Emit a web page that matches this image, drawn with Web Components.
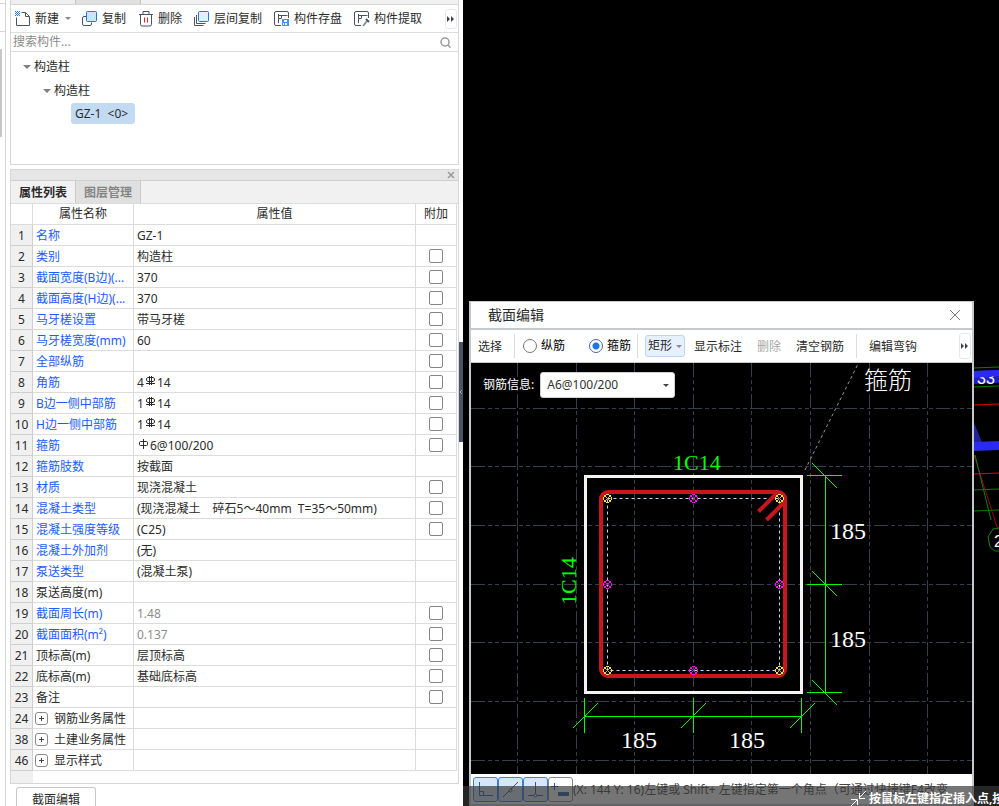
<!DOCTYPE html>
<html lang="zh-CN">
<head>
<meta charset="utf-8">
<title>截面编辑</title>
<style>
html, body { height: 100%; }
body {
    margin: 0;
    overflow: hidden;
    background: #000;
    color: #2b2b2b;
    font: 12px/16px "Noto Sans", "Noto Sans CJK SC", sans-serif;
}
</style>
</head>
<body>
<app-shell></app-shell>

<script>
// Shared base: every element clones its own template into an open shadow root
class BaseElement extends HTMLElement {
    constructor() {
        super();
        const shadow = this.attachShadow({ mode: 'open' });
        const template = document.createElement('template');
        template.innerHTML = this.constructor.html;
        shadow.appendChild(template.content.cloneNode(true));
    }
}

const ICONS = {
    add: '<path d="M6.5 1.5h4l4 4v9h-13v-8M10.5 1.5v4h4" fill="none" stroke="#4a5266"/><path d="M0 0h1v1H0zM2 0h1v1H2zM4 0h1v1H4zM1 1h1v1H1zM3 1h1v1H3zM0 2h1v1H0zM2 2h1v1H2zM4 2h1v1H4zM1 3h1v1H1zM3 3h1v1H3zM0 4h1v1H0zM2 4h1v1H2zM4 4h1v1H4z" fill="#1e74e8"/>',
    copy: '<path d="M4 5.500H2q-1.500 0-1.500 1.500v6q0 1.500 1.500 1.500h6q1.500 0 1.500-1.500v-1.500" fill="none" stroke="#4a5266"/><rect x="4.500" y=".5" width="10" height="10" rx="1" fill="#cfe2fb" stroke="#1e74e8"/>',
    trash: '<path d="M1 3.500h14M5 3V.5h6V3M2.500 4v9.500q0 1.500 1.500 1.500h8q1.500 0 1.500-1.500V4" fill="none" stroke="#4a5266"/><path d="M6.500 6.500v5M9.500 6.500v5" stroke="#e02020"/>',
    layers: '<path d="M.5 6v8.500h9M2.500 4v8.500h9" fill="none" stroke="#4a5266"/><rect x="4.500" y=".5" width="10" height="10" rx="1" fill="#e3effd" stroke="#1e74e8"/>',
    save: '<path d="M7 14.500H2Q.5 14.500.5 13V2Q.5.5 2 .5h11q1.500 0 1.500 1.500v5M4.500 3v9M4.500 7.500h3M4.500 4.500h9M7.500 4.500V7" fill="none" stroke="#4a5266"/><path d="M8 8h7v7H8z" fill="#4c8fe8"/><path d="M10 9h3v2h-3zM9 12h1v2H9zM11 12h2v2h-2z" fill="#fff"/>',
    extract: '<path d="M7 14.500H2Q.5 14.500.5 13V2Q.5.5 2 .5h11q1.500 0 1.500 1.500v5M4.500 3v9M4.500 7.500h3M4.500 4.500h9M7.500 4.500V7" fill="none" stroke="#4a5266"/><path d="M9 15l4-5" stroke="#8a909c" stroke-width="2"/><path d="M12 8l3 3" stroke="#4a5266" stroke-width="2"/>'
};

class ToolItem extends BaseElement {
    static html = `
    <style>
    :host { display: block; flex: none; }
    button {
        display: flex; align-items: center; gap: 4px;
        border: 0; padding: 0; background: none;
        font: inherit; color: #2b2b2b;
    }
    svg { width: 16px; height: 16px; }
    i { display: none; border: 3px solid transparent; border-top-color: #8a8a8a; border-bottom: 0; margin-left: 2px; }
    :host([menu]) { margin-right: -1px; }
    :host([menu]) i { display: block; }
    </style>
    <button type="button"><svg viewBox="0 0 16 16"></svg><slot></slot><i></i></button>`;

    connectedCallback() {
        this.shadowRoot.querySelector('svg').innerHTML = ICONS[this.getAttribute('icon')];
    }
}
customElements.define('tool-item', ToolItem);

class MoreButton extends BaseElement {
    static html = `
    <style>
    :host { display: block; flex: none; margin-left: auto; }
    button {
        display: flex; align-items: center; justify-content: center;
        width: 12px; height: 100%; padding: 0;
        border: 1px solid #e8e8e8; border-radius: 3px; background: #fff;
    }
    svg { flex: none; }
    </style>
    <button type="button" aria-label="更多"><svg width="8" height="6"><path d="M0 0l3 3-3 3zM4 0l3 3-3 3z" fill="#3c4254"/></svg></button>`;
}
customElements.define('more-button', MoreButton);

class ComponentList extends BaseElement {
    static html = `
    <style>
    :host { display: flex; flex-direction: column; height: 165px; border: 1px solid #d6d6d6; border-top: 0; box-sizing: border-box; background: #fff; }
    .tabs { display: flex; height: 4px; flex: none; background: #f1f1f1; border-bottom: 1px solid #d6d6d6; }
    .tabs span { width: 64px; border-right: 1px solid #bfc2c6; background: #efefef; }
    .tabs span + span { background: #e0e0e0; }
    .tools { display: flex; align-items: center; gap: 12px; height: 27px; flex: none; padding: 0 1px 0 4px; border-bottom: 1px solid #dedede; }
    more-button { height: 20px; }
    .search { display: flex; align-items: center; height: 18px; flex: none; padding: 0 7px 0 2px; border-bottom: 1px solid #dedede; }
    input { flex: 1; min-width: 0; border: 0; padding: 0; outline: 0; font: inherit; background: none; }
    input::placeholder { color: #8c8c8c; }
    ul { list-style: none; margin: 0; padding: 0; }
    .tree { padding: 3px 0 0 13px; }
    ul ul { padding-left: 20px; }
    .node { display: flex; align-items: center; gap: 3px; height: 24px; }
    .node i { border: 4px solid transparent; border-top-color: #808080; border-bottom: 0; margin-left: -1px; }
    .tree .leaf { padding-left: 27px; }
    .leaf a { display: inline-block; box-sizing: border-box; min-width: 64px; padding: 3px 4px 2px; border-radius: 3px; background: #c2daf2; color: #2b2b2b; text-decoration: none; }
    </style>
    <div class="tabs"><span></span><span></span></div>
    <div class="tools">
        <tool-item icon="add" menu>新建</tool-item>
        <tool-item icon="copy">复制</tool-item>
        <tool-item icon="trash">删除</tool-item>
        <tool-item icon="layers">层间复制</tool-item>
        <tool-item icon="save">构件存盘</tool-item>
        <tool-item icon="extract">构件提取</tool-item>
        <more-button></more-button>
    </div>
    <div class="search">
        <input type="text" placeholder="搜索构件..." aria-label="搜索构件">
        <svg width="11" height="11" fill="none" stroke="#999" stroke-width="1.500"><circle cx="5" cy="5" r="4"/><path d="M8 8l2.500 2.500"/></svg>
    </div>
    <ul class="tree">
        <li><div class="node"><i></i>构造柱</div>
            <ul>
                <li><div class="node"><i></i>构造柱</div>
                    <ul class="leaf"><li><a href="#gz-1">GZ-1 &nbsp;&lt;0&gt;</a></li></ul>
                </li>
            </ul>
        </li>
    </ul>`;
}
customElements.define('component-list', ComponentList);

// Rebar grade marks that stand in front of the bar diameter
class RebarMark extends BaseElement {
    static html = `
    <style>
    :host { display: inline-block; width: 11px; height: 12px; margin: 0 1px; vertical-align: -1px; }
    svg { display: block; fill: none; stroke: #2b2b2b; }
    .c { display: none; }
    :host([grade="C"]) .c { display: inline; }
    :host([grade="C"]) .a { display: none; }
    </style>
    <svg width="11" height="12">
        <g class="c"><path d="M3 1.500h5l1.500 1v2l-1.500 1H3l-1.500-1v-2zM4.500 0v9M6.500 0v9M1 7.500h9"/></g>
        <g class="a"><rect x="1.500" y="2.500" width="8" height="4" rx="1"/><path d="M5.500 0v10"/></g>
    </svg>`;
}
customElements.define('rebar-mark', RebarMark);

const C = '<rebar-mark grade="C"></rebar-mark>';
const A = '<rebar-mark grade="A"></rebar-mark>';

// [row number, name, value, flags]: b = blue name, c = has tick box, g = grey value, x = expandable
const ROWS = [
    [1, '名称', 'GZ-1', 'b'],
    [2, '类别', '构造柱', 'bc'],
    [3, '截面宽度(B边)(...', '370', 'bc'],
    [4, '截面高度(H边)(...', '370', 'bc'],
    [5, '马牙槎设置', '带马牙槎', 'bc'],
    [6, '马牙槎宽度(mm)', '60', 'bc'],
    [7, '全部纵筋', '', 'bc'],
    [8, '角筋', `4${C}14`, 'bc'],
    [9, 'B边一侧中部筋', `1${C}14`, 'bc'],
    [10, 'H边一侧中部筋', `1${C}14`, 'bc'],
    [11, '箍筋', `${A}6@100/200`, 'bc'],
    [12, '箍筋肢数', '按截面', 'b'],
    [13, '材质', '现浇混凝土', 'bc'],
    [14, '混凝土类型', '(现浇混凝土　碎石5～40mm &nbsp;T=35～50mm)', 'bc'],
    [15, '混凝土强度等级', '(C25)', 'bc'],
    [16, '混凝土外加剂', '(无)', 'b'],
    [17, '泵送类型', '(混凝土泵)', 'b'],
    [18, '泵送高度(m)', '', ''],
    [19, '截面周长(m)', '1.48', 'bcg'],
    [20, '截面面积(m²)', '0.137', 'bcg'],
    [21, '顶标高(m)', '层顶标高', 'c'],
    [22, '底标高(m)', '基础底标高', 'c'],
    [23, '备注', '', 'c'],
    [24, '钢筋业务属性', '', 'x'],
    [38, '土建业务属性', '', 'x'],
    [46, '显示样式', '', 'x']
];

class PropertyTable extends BaseElement {
    static html = `
    <style>
    :host { display: block; }
    table { width: 100%; border-collapse: separate; border-spacing: 0; table-layout: fixed; }
    .n { width: 22px; }
    .name { width: 101px; }
    .add { width: 41px; }
    th, td {
        box-sizing: border-box; height: 21px; padding: 2px 0 0 3px;
        border: solid #dcdcdc; border-width: 0 1px 1px 0;
        font-weight: normal; text-align: left; white-space: nowrap; overflow: hidden; line-height: 18px;
    }
    thead th { text-align: center; padding: 0; }
    tbody th:first-child { padding: 2px 0 0; text-align: center; background: #f0f0f0; border-color: #cfcfcf; }
    td:last-child { text-align: center; padding: 0; }
    .b { color: #1a5cff; }
    .g { color: #8c8c8c; }
    input {
        appearance: none; display: block; box-sizing: border-box; width: 14px; height: 14px; margin: 0 auto;
        border: 1px solid #858585; border-radius: 2px; background: #fff;
    }
    button {
        width: 13px; height: 13px; padding: 0; margin: 0 6px 0 -1px; vertical-align: -1px;
        border: 1px solid #8a8a8a; border-radius: 3px; background: #fff;
    }
    button svg { display: block; margin: auto; }
    </style>
    <table>
        <colgroup><col class="n"><col class="name"><col><col class="add"></colgroup>
        <thead><tr><th></th><th>属性名称</th><th>属性值</th><th>附加</th></tr></thead>
        <tbody></tbody>
    </table>`;

    connectedCallback() {
        this.shadowRoot.querySelector('tbody').innerHTML = ROWS.map(([n, name, value, f]) => `
        <tr>
            <th scope="row">${n}</th>
            <td class="${f.includes('b') ? 'b' : ''}">${f.includes('x') ? `<button type="button" aria-label="展开"><svg width="7" height="7"><path d="M3.500 1v5M1 3.500h5" stroke="#444"/></svg></button>` : ''}${name}</td>
            <td class="${f.includes('g') ? 'g' : ''}">${value}</td>
            <td>${f.includes('c') ? `<input type="checkbox" aria-label="附加 ${n}">` : ''}</td>
        </tr>`).join('');
    }
}
customElements.define('property-table', PropertyTable);

class PropertyPanel extends BaseElement {
    static html = `
    <style>
    :host { display: block; border: 1px solid #d6d6d6; background: #fff; }
    .bar { display: flex; justify-content: flex-end; align-items: center; height: 10px; padding-right: 3px; background: #e6e6e6; border-bottom: 1px solid #d0d0d0; }
    .bar button { display: flex; border: 0; padding: 0; background: none; }
    .tabs { display: flex; height: 22px; background: #f1f1f1; border-bottom: 1px solid #dcdcdc; }
    .tabs button { width: 65px; padding: 1px 0 0; border: 0; border-right: 1px solid #c8cacd; background: #f1f1f1; font: inherit; font-weight: 600; color: #2b2b2b; white-space: nowrap; }
    .tabs button + button { background: #e0e0e0; color: #858585; }
    property-table { margin-right: 1px; }
    .rest { width: 22px; height: 12px; background: #f0f0f0; }
    </style>
    <div class="bar"><button type="button" aria-label="关闭"><svg width="8" height="8"><path d="M1 1l6 6M7 1L1 7" stroke="#9a9a9a" stroke-width="1.500"/></svg></button></div>
    <div class="tabs"><button type="button">属性列表</button><button type="button">图层管理</button></div>
    <property-table></property-table>
    <div class="rest"></div>`;
}
customElements.define('property-panel', PropertyPanel);

class SideDock extends BaseElement {
    static html = `
    <style>
    :host { display: grid; grid-template-columns: 10px 1fr 4px; background: #fff; height: 100vh; overflow: hidden; }
    .rail { width: 5px; border-right: 1px solid #d6d6d6; background: linear-gradient(#c8c8c8, #c8c8c8) 0 49px / 2px 88px no-repeat, linear-gradient(#d6d6d6, #d6d6d6) 0 31px / 5px 1px no-repeat, linear-gradient(#d6d6d6, #d6d6d6) 0 3px / 5px 1px no-repeat, #fff; }
    .main { display: flex; flex-direction: column; gap: 4px; min-width: 0; }
    .section { display: block; align-self: flex-start; flex: none; width: 80px; height: 24px; margin: -1px 0 0 6px; padding: 0; border: 1px solid #c8c8c8; border-bottom: 0; border-radius: 3px 3px 0 0; background: #fff; font: inherit; color: #2b2b2b; }
    .grip { align-self: start; height: 100px; margin-top: 342px; background: #4b5462; display: flex; align-items: center; }
    </style>
    <div class="rail"></div>
    <div class="main">
        <component-list></component-list>
        <property-panel></property-panel>
        <button class="section" type="button">截面编辑</button>
    </div>
    <div class="grip"><svg width="4" height="6"><path d="M3 1L1 3l2 2" fill="none" stroke="#aab"/></svg></div>`;
}
customElements.define('side-dock', SideDock);

class SectionCanvas extends BaseElement {
    static html = `
    <style>
    :host { display: block; background: #000; overflow: hidden; }
    svg { display: block; width: 100%; height: 100%; }
    .grid { stroke: #363e4c; stroke-dasharray: 14 3 4 3 4 3; }
    .dim { stroke: #0f0; fill: none; }
    text { font-family: "Liberation Serif", "Noto Sans CJK SC", serif; font-size: 24px; fill: #fff; }
    .bar { font-size: 22px; fill: #0f0; }
    .call { font-weight: 300; }
    </style>
    <svg viewBox="0 0 501 411" preserveAspectRatio="xMinYMin meet">
        <g class="grid"></g>
        <path d="M334 107L387 1" stroke="#999" stroke-dasharray="3 3"/>
        <rect x="114.500" y="113.500" width="216" height="216" fill="none" stroke="#f4f4f4" stroke-width="3"/>
        <rect x="136.500" y="135.500" width="172" height="172" fill="none" stroke="#b8dcff" stroke-dasharray="3 3"/>
        <g fill="none" stroke="#c9151e" stroke-width="4">
            <rect x="130" y="129" width="184" height="184" rx="7"/>
            <path d="M287.500 148.500L306 130M295.500 157L314 138.500"/>
        </g>
        <g class="dots" fill="none"></g>
        <g class="dim">
            <path d="M354.500 112.500v217M336 112.500h35M336 221.500h35M336 329.500h35"/>
            <path d="M341 100l25 25M341 208l25 25M341 317l25 25"/>
            <path d="M113.500 353.500h217M113.500 335v35M222.500 335v35M330.500 335v35"/>
            <path d="M102 365l25-25M210 365l25-25M319 365l25-25"/>
        </g>
        <text x="359" y="176">185</text>
        <text x="359" y="284">185</text>
        <text x="150" y="385">185</text>
        <text x="258" y="385">185</text>
        <text class="bar" x="202" y="107">1C14</text>
        <text class="bar" transform="translate(105 242) rotate(-90)">1C14</text>
        <text class="call" x="393" y="26">箍筋</text>
    </svg>`;

    connectedCallback() {
        const xs = [46, 105, 163, 222, 280, 339, 398, 456];
        const ys = [45, 103, 162, 221, 279, 338, 397];
        this.shadowRoot.querySelector('.grid').innerHTML =
            xs.map(x => `<path d="M${x}.5 0V411"/>`).join('') +
            ys.map(y => `<path d="M0 ${y}.5H501"/>`).join('');

        // Octagon ring with four small marks inside, drawn on whole pixels
        const corner = [[136, 135], [308, 135], [136, 307], [308, 307]];
        const middle = [[222, 135], [136, 221], [308, 221], [222, 307]];
        const dot = (color, core) => ([x, y]) => `
            <g transform="translate(${x - 4} ${y - 4})" shape-rendering="crispEdges">
                <path d="M3 0h3v1H3zM3 8h3v1H3zM0 3h1v3H0zM8 3h1v3H8zM1 1h2v2H1zM6 1h2v2H6zM1 6h2v2H1zM6 6h2v2H6z" fill="${color}"/>
                <path d="M3 3h1v1H3zM5 3h1v1H5zM4 4h1v1H4zM3 5h1v1H3zM5 5h1v1H5z" fill="${core}"/>
            </g>`;
        this.shadowRoot.querySelector('.dots').innerHTML =
            corner.map(dot('#f6e04a', '#d8a820')).join('') +
            middle.map(dot('#ff10f0', '#e0109a')).join('');
    }
}
customElements.define('section-canvas', SectionCanvas);

class SectionDialog extends BaseElement {
    static html = `
    <style>
    :host { display: flex; flex-direction: column; box-sizing: border-box; border: solid #c6c9cc; border-width: 1px 2px; background: #fff; }
    header { display: flex; align-items: center; justify-content: space-between; height: 26px; padding: 0 11px 0 17px; border-bottom: 2px solid #c6c9cc; font-size: 14px; }
    header button { display: flex; padding: 0; border: 0; background: none; }
    .tools { display: flex; align-items: center; height: 32px; padding: 0 1px 0 7px; border-bottom: 1px solid #c6c9cc; white-space: nowrap; }
    .tools button { border: 0; padding: 2px 0 0; background: none; font: inherit; color: #2b2b2b; }
    .tools button:disabled { color: #a8a8a8; }
    .tools hr { width: 1px; height: 24px; margin: 0 8px 0 12px; border: 0; background: #dcdcdc; }
    label { display: flex; align-items: center; gap: 4px; color: #000; }
    label + label { margin-left: 24px; }
    .tools label + hr { margin: 0 7px 0 6px; }
    input { appearance: none; box-sizing: border-box; width: 14px; height: 14px; margin: 0; border: 1px solid #777; border-radius: 50%; background: #fff; }
    input:checked { border-color: #4a6a98; background: radial-gradient(circle, #1e74e8 3px, #fff 4px); }
    .tools .shape { display: flex; align-items: center; gap: 4px; box-sizing: border-box; height: 22px; padding: 0 2px; border: 1px solid #bcd6f2; border-radius: 3px; background: #e6f1fd; }
    .shape i { border: 3px solid transparent; border-top-color: #8a8a8a; border-bottom: 0; }
    .set { display: flex; gap: 15px; margin-left: 9px; }
    .tools .set + hr { margin: 0 12px; }
    more-button { height: 26px; }
    .stage { position: relative; }
    .info { position: absolute; left: 12px; top: 9px; display: flex; align-items: center; gap: 6px; }
    .info label { color: #fff; }
    select {
        appearance: none; box-sizing: border-box; width: 135px; height: 26px; padding: 0 6px; border: 1px solid #d0d0d0; border-radius: 3px;
        font: inherit; color: #333; background: #fff;
    }
    .drop { position: relative; display: flex; align-items: center; }
    .drop i { position: absolute; right: 6px; border: 3px solid transparent; border-top-color: #444; border-bottom: 0; }
    footer { display: flex; align-items: center; height: 25px; padding: 3px 0 2px 2px; white-space: nowrap; border-bottom: 1px solid #c6c9cc; }
    footer button { box-sizing: border-box; flex: none; width: 25px; height: 25px; padding: 0; border: 1px solid #3c82dc; border-radius: 3px; background: #d6e6fb; }
    footer button:last-of-type { border-color: #8a8a8a; background: #fff; }
    footer svg { display: block; margin: auto; fill: none; }
    footer span { flex: 1; min-width: 0; overflow: hidden; margin-right: 20px; color: #444; }
    </style>
    <header><slot name="title"></slot><button type="button" aria-label="关闭"><svg width="12" height="12"><path d="M1 1l10 10M11 1L1 11" stroke="#777"/></svg></button></header>
    <div class="tools">
        <button type="button">选择</button>
        <hr>
        <label><input type="radio" name="kind">纵筋</label>
        <label><input type="radio" name="kind" checked>箍筋</label>
        <hr>
        <button class="shape" type="button">矩形<i></i></button>
        <div class="set">
            <button type="button">显示标注</button>
            <button type="button" disabled>删除</button>
            <button type="button">清空钢筋</button>
        </div>
        <hr>
        <button type="button">编辑弯钩</button>
        <more-button></more-button>
    </div>
    <div class="stage">
        <section-canvas></section-canvas>
        <div class="info">
            <label for="rebar">钢筋信息:</label>
            <div class="drop"><select id="rebar"><option>A6@100/200</option></select><i></i></div>
        </div>
    </div>
    <footer>
        <button type="button" aria-label="正交"><svg width="17" height="17"><path d="M2.500 1v13.500H16M2.500 10.500h4v4" stroke="#1f5fae"/></svg></button>
        <button type="button" aria-label="对象捕捉"><svg width="17" height="17"><path d="M1 16L16 1" stroke="#4a5266"/><circle cx="8.500" cy="9.500" r="1.500" fill="#d6e6fb" stroke="#4a5266"/></svg></button>
        <button type="button" aria-label="垂足"><svg width="17" height="17"><path d="M8.500 1v13M1 14.500h15" stroke="#4a5266"/><circle cx="8.500" cy="14.500" r="1.500" fill="#fff" stroke="#1f5fae"/></svg></button>
        <button type="button" aria-label="动态输入"><svg width="19" height="17"><path d="M0 5.500h7M3.500 2v7" stroke="#1f5fae"/><path d="M7 11h11v4H7z" fill="#1f5fae"/></svg></button>
        <span>(X: 144 Y: 16)左键或 Shift+ 左键指定第一个角点（可通过快捷键F4改变</span>
    </footer>`;
}
customElements.define('section-dialog', SectionDialog);

// Part of the 3D model that shows beside the dialog
class ModelScene extends BaseElement {
    static html = `
    <style>
    :host { display: block; }
    svg { display: block; }
    text { font: 16px "Liberation Sans", sans-serif; fill: #fff; }
    </style>
    <svg width="26" height="200" fill="none">
        <path d="M0 11l26-1v13l-26 1z" fill="#2020c0"/>
        <text x="4" y="24">33</text>
        <path d="M0 11l26-1v6l-26 2z" fill="#2a2af0"/>
        <path d="M0 8l26-1M0 27l26-1M0 130l26-1M0 151l26-1" stroke="#008000"/>
        <path d="M0 45l26-1M0 114l26-1" stroke="#e00000"/>
        <path d="M0 60l10 25H0z" fill="#22229a"/>
        <path d="M0 82l26-1v9l-26 1z" fill="#2a2af0"/>
        <path d="M1 95l24 75" stroke="#a00000"/>
        <path d="M2 95l16 65M26 168l-6 1-5 8 2 10 5 4h4" stroke="#108010"/>
        <text x="21" y="187">2</text>
    </svg>`;
}
customElements.define('model-scene', ModelScene);

class HintStrip extends BaseElement {
    static html = `
    <style>
    :host { display: flex; align-items: flex-start; gap: 2px; height: 20px; overflow: hidden; box-sizing: border-box; padding: 5px 0 0 387px; background: rgba(55, 55, 55, .69); color: #fff; font-weight: 600; white-space: nowrap; }
    svg { flex: none; }
    </style>
    <svg width="17" height="17" fill="none" stroke="#fff"><path d="M16 0l-7 7M9.500 2v5.500H15M0 16l7-7M1 8.500h6.500V14"/></svg><slot></slot>`;
}
customElements.define('hint-strip', HintStrip);

class AppShell extends BaseElement {
    static html = `
    <style>
    :host { display: grid; grid-template-columns: 463px minmax(0, 1fr); height: 100vh; background: #000; }
    .view { position: relative; overflow: hidden; }
    section-dialog { position: absolute; left: 6px; right: 25px; top: 301px; }
    model-scene { position: absolute; right: 0; top: 360px; }
    hint-strip { position: absolute; left: 0; right: 0; bottom: 0; }
    </style>
    <side-dock></side-dock>
    <div class="view">
        <model-scene></model-scene>
        <section-dialog><span slot="title">截面编辑</span></section-dialog>
        <hint-strip>按鼠标左键指定插入点,按</hint-strip>
    </div>`;
}
customElements.define('app-shell', AppShell);
</script>
</body>
</html>
